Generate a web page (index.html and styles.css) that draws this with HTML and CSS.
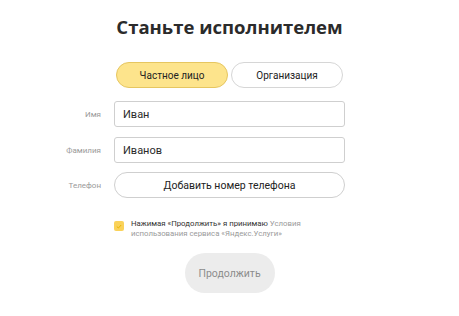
FILE: index.html
```html
<!DOCTYPE html>
<html lang="ru">
<head>
<meta charset="utf-8">
<link rel="stylesheet" href="styles.css">
</head>
<body>
<main class="page">
  <h1 class="title">Станьте исполнителем</h1>
  <div class="form">
    <div class="label"></div>
    <div class="toggle">
      <button class="seg seg-active">Частное лицо</button>
      <button class="seg">Организация</button>
    </div>
    <div class="label">Имя</div>
    <div class="field">Иван</div>
    <div class="label">Фамилия</div>
    <div class="field">Иванов</div>
    <div class="label">Телефон</div>
    <button class="phone">Добавить номер телефона</button>
    <div class="label"></div>
    <div class="agree">
      <span class="check">
        <svg width="6" height="5" viewBox="0 0 6 5"><path d="M0.8 2.5 L2.4 4 L5.2 1" fill="none" stroke="#e8b400" stroke-width="1"/></svg>
      </span>
      <p class="agree-text"><span>Нажимая «Продолжить» я принимаю</span> <span class="muted">Условия</span><br><span class="muted">использования сервиса «Яндекс.Услуги»</span></p>
    </div>
  </div>
  <div class="actions">
    <button class="continue">Продолжить</button>
  </div>
</main>
</body>
</html>
```

FILE: styles.css
```css
* { box-sizing: border-box; }
html, body { margin: 0; padding: 0; background: #fff; }
body {
  font-family: Roboto, "Noto Sans", sans-serif;
  color: #222;
  width: 459px;
  height: 316px;
  overflow: hidden;
}
.page { padding-top: 12px; }
.title {
  margin: 0;
  text-align: center;
  font-family: "Open Sans", "Noto Sans", sans-serif;
  font-size: 18.5px;
  line-height: 30px;
  font-weight: 700;
  color: #2b2b2b;
}
.form {
  margin-top: 20px;
  display: grid;
  grid-template-columns: 101px 231px;
  column-gap: 13px;
  row-gap: 10px;
  align-items: center;
}
.label {
  text-align: right;
  font-size: 8px;
  color: #9a9a9a;
}
.toggle {
  display: flex;
  gap: 3px;
  padding-left: 2px;
  margin-bottom: 3px;
}
button {
  font-family: inherit;
  cursor: pointer;
}
.seg {
  width: 112px;
  height: 26px;
  border-radius: 13px;
  border: 1px solid #d6d6d6;
  background: #fff;
  font-size: 10px;
  color: #222;
  padding: 0;
}
.seg-active {
  background: #fde48c;
  border-color: #e6c660;
}
.field {
  height: 26px;
  border: 1px solid #cfcfcf;
  border-radius: 3px;
  padding-left: 8px;
  display: flex;
  align-items: center;
  font-size: 11px;
  color: #2a2a2a;
}
.phone {
  height: 26px;
  margin-top: -1px;
  border: 1px solid #cfcfcf;
  border-radius: 13px;
  background: #fff;
  font-size: 10.5px;
  color: #222;
  padding: 0;
}
.agree {
  margin-top: 11px;
  display: flex;
  gap: 7px;
  align-items: flex-start;
}
.check {
  flex: none;
  width: 10px;
  height: 10px;
  margin-top: 2px;
  background: #fad25a;
  border-radius: 2px;
  display: flex;
  align-items: center;
  justify-content: center;
}
.agree-text {
  margin: 0;
  font-size: 7.8px;
  line-height: 10px;
  color: #333;
  white-space: nowrap;
}
.muted { color: #9a9a9a; }
.actions {
  margin-top: 14px;
  display: flex;
  justify-content: center;
}
.continue {
  width: 90px;
  height: 40px;
  border-radius: 20px;
  border: 0;
  background: #ececec;
  color: #8c8c8c;
  font-size: 10.5px;
  padding: 0;
}
```
